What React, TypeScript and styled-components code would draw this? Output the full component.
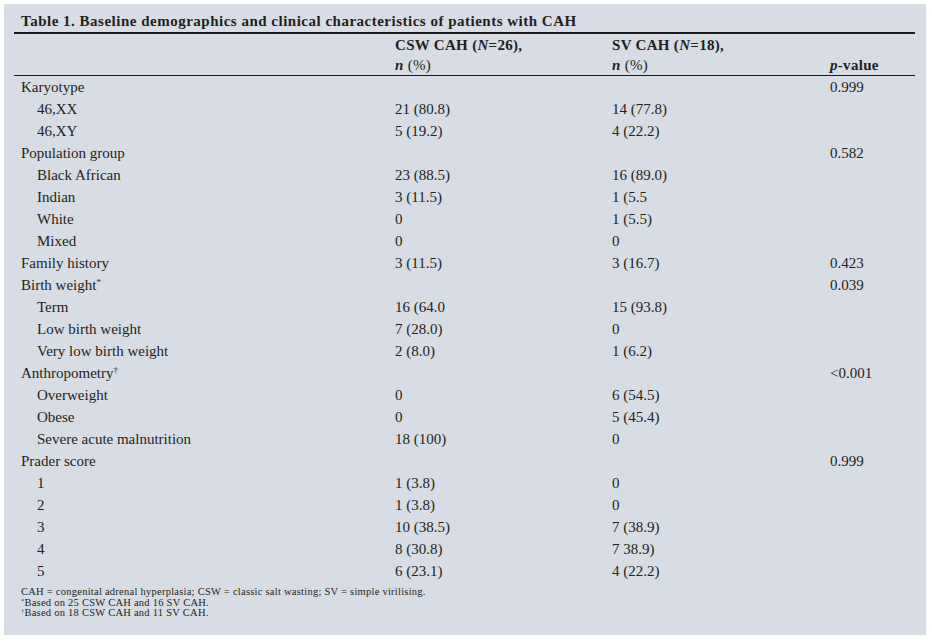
import React from 'react';
import styled, { createGlobalStyle } from 'styled-components';

const GlobalStyle = createGlobalStyle`
  html, body {
    margin: 0;
    padding: 0;
    background: #ffffff;
  }
  body {
    font-family: "Liberation Serif", "Times New Roman", serif;
    color: #231f20;
  }
`;

const Panel = styled.div`
  margin: 4px 0 0 4px;
  width: 922px;
  height: 631px;
  box-sizing: border-box;
  padding: 6px 11px 0 10px;
  background: #d8dce5;
`;

const Title = styled.div`
  padding-left: 7px;
  font-size: 15px;
  line-height: 22px;
  font-weight: bold;
  letter-spacing: 0.5px;
  border-bottom: 2px solid #1c1a1b;
`;

const Grid = styled.div`
  display: grid;
  grid-template-columns: 374px 217px 218px 1fr;
  padding-left: 7px;
`;

const Head = styled(Grid)`
  padding-top: 1px;
  border-bottom: 1px solid #1c1a1b;
  font-size: 15px;
  line-height: 20px;
  font-weight: bold;
  letter-spacing: 0.3px;
`;

const Row = styled(Grid)`
  font-size: 15px;
  line-height: 22px;
`;

const Cell = styled.div`
  white-space: nowrap;
`;

const Label = styled(Cell)<{ $indent?: boolean }>`
  padding-left: ${({ $indent }) => ($indent ? '16px' : '0')};
`;

const Regular = styled.span`
  font-weight: normal;
`;

const Sup = styled.sup`
  font-size: 0.6em;
  line-height: 0;
  vertical-align: 0.55em;
`;

const Notes = styled.div`
  margin-top: 5px;
  padding-left: 7px;
  font-size: 10.5px;
  line-height: 10.5px;
  letter-spacing: 0.25px;
`;

type Line = {
  label: React.ReactNode;
  indent?: boolean;
  csw?: string;
  sv?: string;
  p?: string;
};

const rows: Line[] = [
  { label: 'Karyotype', p: '0.999' },
  { label: '46,XX', indent: true, csw: '21 (80.8)', sv: '14 (77.8)' },
  { label: '46,XY', indent: true, csw: '5 (19.2)', sv: '4 (22.2)' },
  { label: 'Population group', p: '0.582' },
  { label: 'Black African', indent: true, csw: '23 (88.5)', sv: '16 (89.0)' },
  { label: 'Indian', indent: true, csw: '3 (11.5)', sv: '1 (5.5' },
  { label: 'White', indent: true, csw: '0', sv: '1 (5.5)' },
  { label: 'Mixed', indent: true, csw: '0', sv: '0' },
  { label: 'Family history', csw: '3 (11.5)', sv: '3 (16.7)', p: '0.423' },
  {
    label: (
      <>
        Birth weight<Sup>*</Sup>
      </>
    ),
    p: '0.039',
  },
  { label: 'Term', indent: true, csw: '16 (64.0', sv: '15 (93.8)' },
  { label: 'Low birth weight', indent: true, csw: '7 (28.0)', sv: '0' },
  { label: 'Very low birth weight', indent: true, csw: '2 (8.0)', sv: '1 (6.2)' },
  {
    label: (
      <>
        Anthropometry<Sup>†</Sup>
      </>
    ),
    p: '<0.001',
  },
  { label: 'Overweight', indent: true, csw: '0', sv: '6 (54.5)' },
  { label: 'Obese', indent: true, csw: '0', sv: '5 (45.4)' },
  { label: 'Severe acute malnutrition', indent: true, csw: '18 (100)', sv: '0' },
  { label: 'Prader score', p: '0.999' },
  { label: '1', indent: true, csw: '1 (3.8)', sv: '0' },
  { label: '2', indent: true, csw: '1 (3.8)', sv: '0' },
  { label: '3', indent: true, csw: '10 (38.5)', sv: '7 (38.9)' },
  { label: '4', indent: true, csw: '8 (30.8)', sv: '7 38.9)' },
  { label: '5', indent: true, csw: '6 (23.1)', sv: '4 (22.2)' },
];

export default function App() {
  return (
    <>
      <GlobalStyle />
      <Panel>
        <Title>Table 1. Baseline demographics and clinical characteristics of patients with CAH</Title>

        <Head>
          <Cell />
          <Cell>
            CSW CAH (<i>N</i>=26),
          </Cell>
          <Cell>
            SV CAH (<i>N</i>=18),
          </Cell>
          <Cell />
          <Cell />
          <Cell>
            <i>n</i> <Regular>(%)</Regular>
          </Cell>
          <Cell>
            <i>n</i> <Regular>(%)</Regular>
          </Cell>
          <Cell>
            <i>p</i>-value
          </Cell>
        </Head>

        {rows.map((r, i) => (
          <Row key={i}>
            <Label $indent={r.indent}>{r.label}</Label>
            <Cell>{r.csw}</Cell>
            <Cell>{r.sv}</Cell>
            <Cell>{r.p}</Cell>
          </Row>
        ))}

        <Notes>
          <div>CAH = congenital adrenal hyperplasia; CSW = classic salt wasting; SV = simple virilising.</div>
          <div>
            <Sup>*</Sup>Based on 25 CSW CAH and 16 SV CAH.
          </div>
          <div>
            <Sup>†</Sup>Based on 18 CSW CAH and 11 SV CAH.
          </div>
        </Notes>
      </Panel>
    </>
  );
}
